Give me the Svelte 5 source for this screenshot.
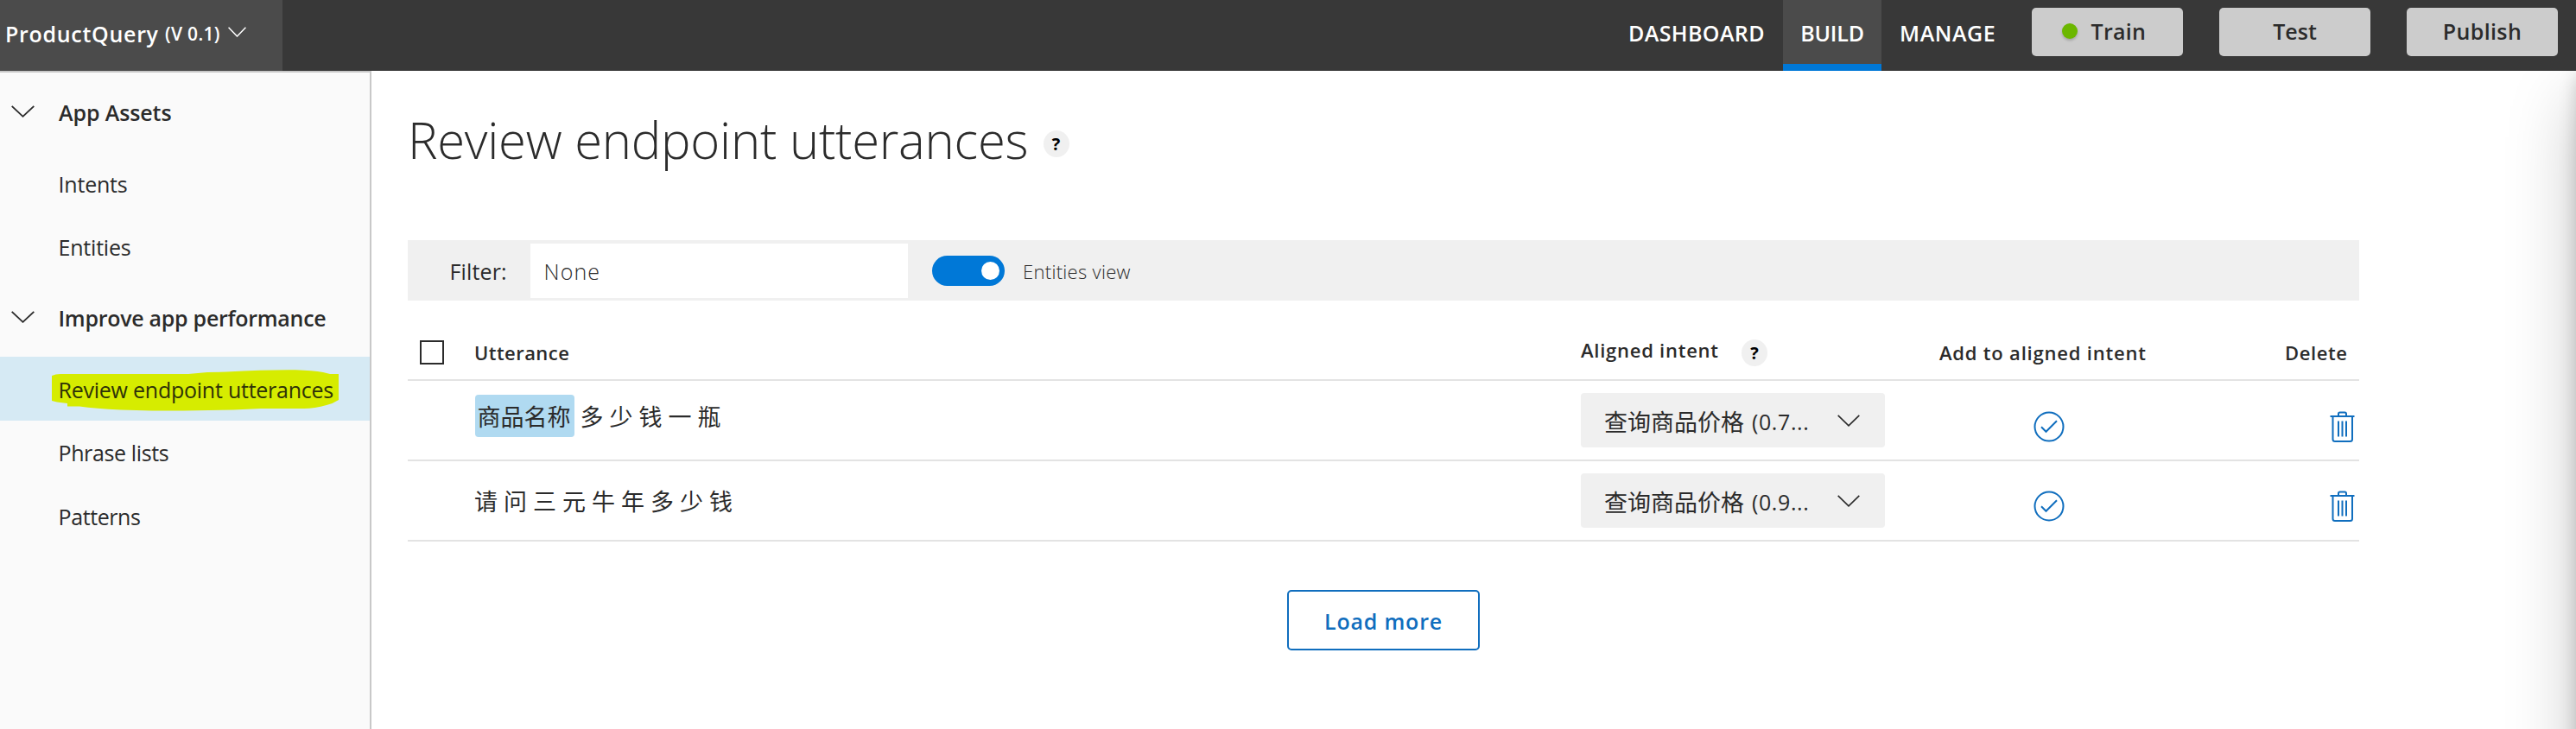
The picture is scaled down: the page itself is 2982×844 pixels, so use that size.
<script>
  const assets = [
    { label: 'Intents', ls: -0.2 },
    { label: 'Entities', ls: -0.2 }
  ];
  const improve = [
    { label: 'Review endpoint utterances', ls: -0.24, active: true },
    { label: 'Phrase lists', ls: -0.38 },
    { label: 'Patterns', ls: -0.4 }
  ];
  const rows = [
    { entity: '商品名称', text: '多 少 钱 一 瓶', intent: '查询商品价格', score: '(0.7...' },
    { entity: '', text: '请 问 三 元 牛 年 多 少 钱', intent: '查询商品价格', score: '(0.9...' }
  ];
</script>

{#snippet chevron(w, h, sw)}
  <svg class="chev" width={w} height={h} viewBox="0 0 26 14" preserveAspectRatio="none" aria-hidden="true">
    <path d="M0.7 0.9 13 12.8 25.3 0.9" fill="none" stroke="currentColor" stroke-width={sw} />
  </svg>
{/snippet}

{#snippet item(entry)}
  <li class="item" class:active={entry.active}>
    {#if entry.active}
      <svg class="marker" width="332" height="49" viewBox="60 15 332 49" aria-hidden="true">
        <path fill="#d6ec00" d="M60 22 Q64 20 70 20 H218 L240 18 262 17.5 Q310 14.8 342 15.2 Q362 15.8 374 18 L382 20 H392 V50 Q386 54 378 56 Q364 60 352 60 H302 L270 61.5 212 62.6 H176 L140 61.6 Q110 60 92 57.5 H78 V54 L66 52.5 60 51 Z" />
      </svg>
    {/if}
    <span style="letter-spacing:{entry.ls}px">{entry.label}</span>
  </li>
{/snippet}

<div class="app">
  <header>
    <div class="brand">
      <b>ProductQuery</b><span>(V 0.1)</span>{@render chevron(21, 12, 1.9)}
    </div>
    <nav>
      <a class="dash">DASHBOARD</a>
      <a class="build">BUILD</a>
      <a class="manage">MANAGE</a>
    </nav>
    <div class="actions">
      <button class="start"><i class="dot"></i><span class="train">Train</span></button>
      <button><span>Test</span></button>
      <button><span class="publish">Publish</span></button>
    </div>
  </header>

  <div class="body">
    <aside>
      <h2 class="first">{@render chevron(27, 14, 1.8)}<span>App Assets</span></h2>
      <ul>{#each assets as entry}{@render item(entry)}{/each}</ul>
      <h2 class="second">{@render chevron(27, 14, 1.8)}<span>Improve app performance</span></h2>
      <ul>{#each improve as entry}{@render item(entry)}{/each}</ul>
    </aside>

    <main>
      <div class="title">
        <h1>Review endpoint utterances</h1>
        <span class="help">?</span>
      </div>

      <div class="filter">
        <span class="label">Filter:</span>
        <div class="input">None</div>
        <div class="toggle"><i></i></div>
        <span class="view">Entities view</span>
      </div>

      <div class="grid head">
        <i class="box"></i>
        <span class="utt">Utterance</span>
        <div class="aligned"><span>Aligned intent</span><span class="help">?</span></div>
        <span class="add">Add to aligned intent</span>
        <span class="del">Delete</span>
      </div>

      {#each rows as row}
        <div class="grid row">
          <i></i>
          <div class="utterance">
            {#if row.entity}<mark>{row.entity}</mark>{/if}<span>{row.text}</span>
          </div>
          <div class="cell">
            <div class="drop">
              <span class="intent">{row.intent}</span><span class="score">{row.score}</span>
              {@render chevron(26, 14, 1.6)}
            </div>
          </div>
          <div class="cell icon ok">
            <svg width="36" height="36" viewBox="0 0 36 36" fill="none" stroke="#106ebe" stroke-width="2">
              <circle cx="18" cy="18" r="16.5" />
              <path d="M9 18.3 14.5 23.8 27 11.2" />
            </svg>
          </div>
          <div class="cell icon trash">
            <svg width="29" height="36" viewBox="0 0 29 36" fill="none" stroke="#106ebe" stroke-width="2">
              <path d="M0.5 6H28.5" />
              <path d="M10 6V3.2Q10 1.5 11.7 1.5H17.3Q19 1.5 19 3.2V6" />
              <path d="M3.5 6V32.5Q3.5 35 6 35H23.5Q26 35 26 32.5V6" />
              <path d="M10 11.5V29.5M14.5 11.5V29.5M19 11.5V29.5" />
            </svg>
          </div>
        </div>
      {/each}

      <div class="more"><button>Load more</button></div>
      <div class="panel"></div>
    </main>
  </div>
</div>

<style>
  :global(body) { margin: 0; }
  .app {
    width: 2982px;
    height: 844px;
    display: flex;
    flex-direction: column;
    overflow: hidden;
    background: #fff;
    color: #2b2b2b;
    font-family: "Open Sans", "Noto Sans CJK SC", sans-serif;
    font-size: 25px;
    line-height: 34px;
    white-space: nowrap;
  }
  .app * { box-sizing: border-box; }
  svg { display: block; flex: none; }
  h1, h2, ul { margin: 0; padding: 0; list-style: none; }

  header {
    height: 82px;
    flex: none;
    display: flex;
    background: #383838;
    color: #fff;
    font-weight: 600;
  }
  .brand {
    width: 327px;
    display: flex;
    align-items: center;
    padding: 0 0 5px 6px;
    background: #4b4b4b;
  }
  .brand b { font-weight: 600; letter-spacing: 0.7px; width: 185px; }
  .brand span { font-size: 21px; letter-spacing: 0.3px; width: 72.5px; }
  .brand .chev { margin-bottom: 4px; }
  nav { display: flex; margin-left: auto; }
  nav a { display: flex; align-items: center; padding-bottom: 6px; }
  .dash { width: 179px; letter-spacing: 0.4px; }
  .build {
    width: 114px;
    justify-content: center;
    background: #4b4b4b;
    border-bottom: 8px solid #0078d7;
  }
  nav .build { padding: 2px 0 0; letter-spacing: -0.2px; }
  .manage { width: 174px; padding-left: 21px; letter-spacing: 0.6px; }
  .actions { display: flex; gap: 42px; padding: 9px 21px 0 0; }
  button { font: inherit; padding: 0; border: 0; }
  .actions button {
    width: 175px;
    height: 56px;
    display: flex;
    align-items: center;
    justify-content: center;
    padding-bottom: 2px;
    border-radius: 5px;
    background: #ccc;
    color: #2b2b2b;
  }
  .actions .start { justify-content: flex-start; padding-left: 35px; }
  .train { letter-spacing: 0.3px; }
  .publish { letter-spacing: 0.35px; }
  .dot {
    width: 18px;
    height: 18px;
    margin-right: 15.5px;
    border-radius: 50%;
    background: #6bb700;
    box-shadow: 0 2px 3px rgba(0, 0, 0, 0.2);
  }

  .body { flex: 1; display: flex; min-height: 0; }
  aside {
    width: 430px;
    flex: none;
    background: #fafafa;
    border-top: 2px solid #c8c8c8;
    border-right: 2px solid #c8c8c8;
  }
  h2 {
    display: flex;
    align-items: center;
    padding-left: 12.5px;
    font-size: 25px;
    font-weight: 600;
    gap: 28.5px;
  }
  h2 .chev { margin-bottom: 3px; }
  .first { height: 92px; }
  .first span { letter-spacing: -0.1px; }
  .second { height: 90px; }
  .second span { letter-spacing: -0.28px; margin-left: -0.5px; }
  .item { position: relative; height: 74px; display: flex; align-items: center; padding-left: 67.5px; }
  .first + ul .item:first-child { height: 73px; }
  .active { background: #d6eaf4; color: #2e3208; }
  .active span { position: relative; top: 1px; }
  .marker { position: absolute; left: 60px; top: 15px; }

  main { flex: 1; position: relative; overflow: hidden; padding-left: 42px; }
  .title { height: 196px; padding-bottom: 37px; display: flex; align-items: center; }
  h1 { width: 735.5px; font-size: 58px; font-weight: 330; line-height: 80px; letter-spacing: -0.25px; }
  .help {
    width: 30px;
    height: 31px;
    border-radius: 50%;
    background: #f0f0f0;
    color: #000;
    font-size: 20px;
    font-weight: 700;
    line-height: 32px;
    text-align: center;
  }
  .title .help { margin-top: 10px; }

  .filter {
    width: 2258.5px;
    height: 70px;
    display: flex;
    align-items: center;
    background: #f0f0f0;
  }
  .label { width: 141.5px; padding: 2px 0 0 48.5px; letter-spacing: 0.15px; }
  .input {
    width: 437.5px;
    height: 63px;
    padding: 0 0 0 16px;
    background: #fff;
    font-weight: 350;
    line-height: 65px;
    letter-spacing: 1.1px;
  }
  .toggle {
    width: 84px;
    height: 35px;
    margin: 1px 21px 0 28px;
    padding: 7px 6px;
    border-radius: 18px;
    background: #0078d7;
    display: flex;
    justify-content: flex-end;
  }
  .toggle i { width: 21px; height: 21px; border-radius: 50%; background: #fff; }
  .view { padding-top: 2px; font-size: 22px; font-weight: 350; letter-spacing: 0.3px; }

  .grid {
    width: 2258.5px;
    height: 93px;
    display: grid;
    grid-template-columns: 78px 1280px 415px 399px 1fr;
    border-bottom: 2px solid #e3e3e3;
  }
  .head { padding-top: 29px; align-items: center; font-size: 22px; font-weight: 600; letter-spacing: 0.8px; }
  .box { width: 28px; height: 28px; margin-left: 14px; border: 2px solid #2b2b2b; }
  .utt { letter-spacing: 0.45px; margin-left: -1px; }
  .aligned { display: flex; align-items: center; letter-spacing: 0.75px; }
  .aligned span:first-child { width: 186px; margin-bottom: 6px; }
  .aligned .help { letter-spacing: 0; }
  .del { padding-left: 1px; letter-spacing: 0.6px; }

  .utterance {
    display: flex;
    align-items: center;
    align-self: start;
    height: 49px;
    margin-top: 16px;
    font-size: 27px;
    line-height: 49px;
  }
  mark {
    width: 115px;
    height: 49px;
    margin-right: 6.5px;
    padding: 1px 0 0 2.5px;
    border-radius: 4px;
    background: #b0daf1;
    color: inherit;
    line-height: 50px;
  }
  .utterance span { padding-top: 2px; }
  .row + .row .utterance { margin: 21px 0 0 -1px; }
  .cell { padding-top: 14px; }
  .drop {
    width: 351.5px;
    height: 62.5px;
    display: flex;
    align-items: center;
    padding: 0 29px 0 27px;
    border-radius: 4px;
    background: #f0f0f0;
  }
  .intent { width: 171px; padding-top: 6px; font-size: 27px; }
  .score { padding-top: 4px; letter-spacing: 0.6px; }
  .drop .chev { margin: 1px 0 0 auto; }
  .ok { padding: 35px 0 0 108.5px; }
  .trash { padding: 35px 5px 0 0; display: flex; justify-content: flex-end; }
  .row + .row .icon { padding-top: 34px; }

  .more { padding: 56px 0 0 1018px; }
  .more button {
    width: 223px;
    height: 70px;
    padding: 2px 0 0;
    border: 2px solid #106ebe;
    border-radius: 5px;
    background: #fff;
    color: #106ebe;
    font-weight: 600;
    letter-spacing: 0.8px;
  }
  .panel {
    position: absolute;
    top: 0;
    left: 100%;
    width: 300px;
    height: 1000px;
    box-shadow: 0 33px 75px rgba(0, 0, 0, 0.22), 0 6px 19px rgba(0, 0, 0, 0.18);
  }
</style>
